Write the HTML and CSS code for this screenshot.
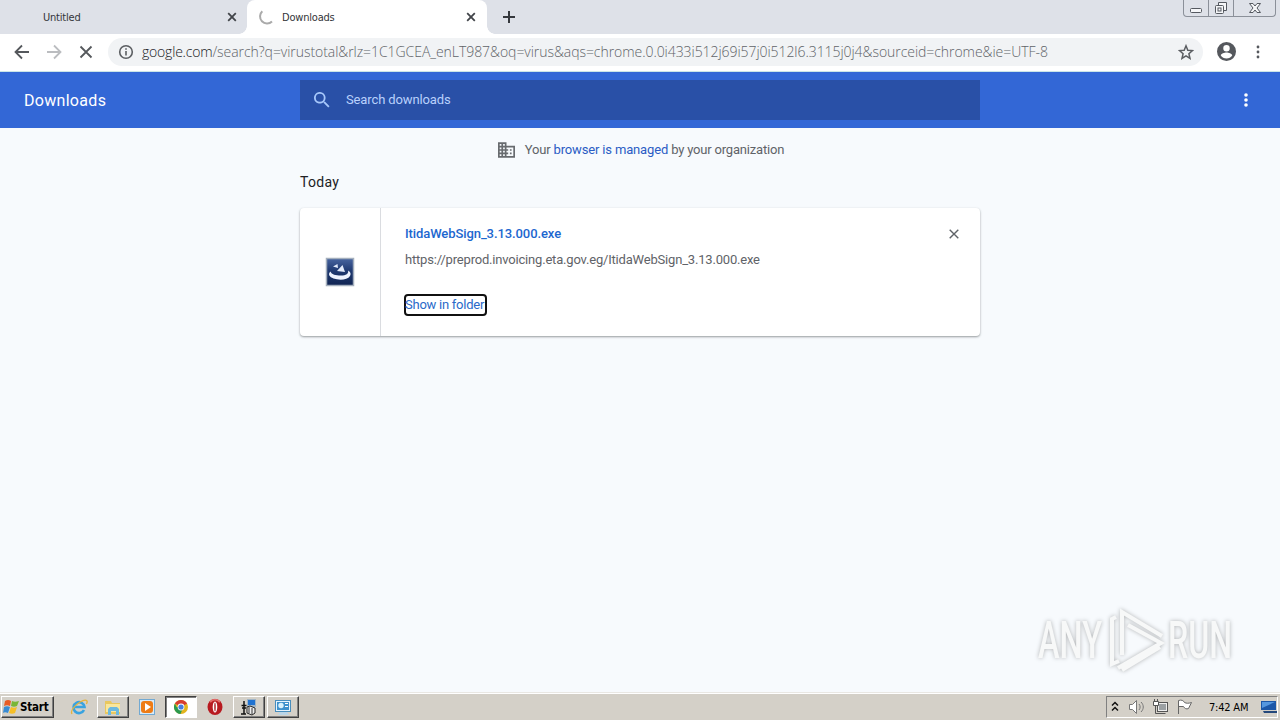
FILE: index.html
```html
<!DOCTYPE html>
<html lang="en">
<head>
    <meta charset="UTF-8">
    <title>Downloads</title>
    <link rel="stylesheet" href="styles.css">
</head>
<body>
<div class="tabs">
    <div class="tab tab-first">
        <span class="tab-title">Untitled</span>
        <svg class="tab-close" viewBox="0 0 10 10"><path d="M1.2 1.2l7.6 7.6M8.8 1.2L1.2 8.8"/></svg>
    </div>
    <div class="tab tab-active">
        <svg class="spinner" viewBox="0 0 16 16"><path d="M4.3 2.2A7 7 0 1 0 14 12.6"/></svg>
        <span class="tab-title">Downloads</span>
        <svg class="tab-close" viewBox="0 0 10 10"><path d="M1.2 1.2l7.6 7.6M8.8 1.2L1.2 8.8"/></svg>
    </div>
    <svg class="new-tab" viewBox="0 0 12 12"><path d="M6 0v12M0 6h12"/></svg>
    <div class="win-buttons">
        <span class="win-btn"><svg width="14" height="16" viewBox="0 0 14 16"><rect x="1.5" y="8.5" width="11" height="4" rx="1"/></svg></span>
        <span class="win-btn"><svg width="14" height="16" viewBox="0 0 14 16"><path d="M4.5 5V2.5h8v8H10"/><rect x="1.5" y="5.5" width="8" height="8" rx="1"/><rect x="4" y="8" width="3" height="3"/></svg></span>
        <span class="win-btn win-close"><svg width="14" height="16" viewBox="0 0 14 16"><path d="M1.5 3.5h3.5l2 2.5 2-2.5h3.500L9 8l3.500 4.500H9L7 10l-2 2.500H1.500L5 8z"/></svg></span>
    </div>
</div>

<div class="toolbar">
    <svg class="nav" viewBox="0 0 16 16"><path d="M15 8H2M8 1.500L1.500 8 8 14.500"/></svg>
    <svg class="nav nav-off" viewBox="0 0 16 16"><path d="M1 8h13M8 1.500L14.500 8 8 14.500"/></svg>
    <svg class="nav" viewBox="0 0 16 16"><path d="M2.500 2.500l11 11M13.500 2.500l-11 11"/></svg>
    <div class="omnibox">
        <svg class="info" viewBox="0 0 16 16"><circle cx="8" cy="8" r="6.300"/><path d="M8 7v4.500M8 4.300v1.500"/></svg>
        <span class="url"><span class="host">google.com</span><span class="path">/search?q=virustotal&amp;rlz=1C1GCEA_enLT987&amp;oq=virus&amp;aqs=chrome.0.0i433i512j69i57j0i512l6.3115j0j4&amp;sourceid=chrome&amp;ie=UTF-8</span></span>
        <svg class="star" viewBox="0 0 16 16"><path d="M8 1.800l1.800 4.400 4.700.4-3.600 3.100 1.100 4.600L8 11.800l-4 2.500 1.100-4.600L1.500 6.600l4.700-.4z"/></svg>
    </div>
    <svg class="avatar" viewBox="2 2 20 20"><path d="M12 2a10 10 0 1 0 0 20 10 10 0 0 0 0-20zm0 3.200a3.400 3.400 0 1 1 0 6.800 3.400 3.400 0 0 1 0-6.800zm0 14.200c-2.500 0-4.700-1.300-6-3.200 0-2 4-3.100 6-3.100s6 1.100 6 3.100a7.200 7.200 0 0 1-6 3.200z"/></svg>
    <svg class="menu" viewBox="0 0 4 14"><circle cx="2" cy="2" r="1.400"/><circle cx="2" cy="7" r="1.400"/><circle cx="2" cy="12" r="1.400"/></svg>
</div>

<div class="header">
    <h1>Downloads</h1>
    <div class="search">
        <svg viewBox="3 3 18 18"><path d="M15.500 14h-.79l-.28-.27A6.500 6.500 0 1 0 13.730 14.430l.27.28v.79l5 4.990L20.490 19l-4.990-5zm-6 0a4.500 4.500 0 1 1 0-9 4.500 4.500 0 0 1 0 9z"/></svg>
        <span>Search downloads</span>
    </div>
    <svg class="more" viewBox="0 0 4 14"><circle cx="2" cy="2" r="1.800"/><circle cx="2" cy="7" r="1.800"/><circle cx="2" cy="12" r="1.800"/></svg>
</div>

<div class="content">
    <div class="managed">
        <svg viewBox="2 3 20 18"><path d="M12 7V3H2v18h20V7H12zM6 19H4v-2h2v2zm0-4H4v-2h2v2zm0-4H4V9h2v2zm0-4H4V5h2v2zm4 12H8v-2h2v2zm0-4H8v-2h2v2zm0-4H8V9h2v2zm0-4H8V5h2v2zm10 12h-8v-2h2v-2h-2v-2h2v-2h-2V9h8v10zm-2-8h-2v2h2v-2zm0 4h-2v2h2v-2z"/></svg>
        <span>Your <a>browser is managed</a> by your organization</span>
    </div>
    <h2>Today</h2>
    <div class="card">
        <div class="card-icon">
            <svg width="30" height="30" viewBox="0 0 30 30">
                <defs><linearGradient id="navy" x2="0" y2="1"><stop stop-color="#4865a0"/><stop offset=".45" stop-color="#203a72"/><stop offset="1" stop-color="#102452"/></linearGradient></defs>
                <rect x="1.500" y="1.500" width="27" height="27" fill="url(#navy)" stroke="#a4afbd" stroke-width="1.500"/>
                <path d="M5.500 14.500C2.500 17 4.500 20 8.500 21.500c6 2 14 1.500 16.500-2.500 1.500-2.500 0-4.500-2-5.500 1 3-2 5-7 5-5.500 0-9.500-1-10.500-4z" fill="#eef3ff"/>
                <path d="M8 9.500L12.500 7l.5 4zM12 14l5.500-6 2.500 7z" fill="#e3ebfb"/>
            </svg>
        </div>
        <div class="card-body">
            <div class="file-name">ItidaWebSign_3.13.000.exe</div>
            <div class="file-url">https://preprod.invoicing.eta.gov.eg/ItidaWebSign_3.13.000.exe</div>
            <span class="show">Show in folder</span>
        </div>
        <svg class="remove" viewBox="0 0 10 10"><path d="M.7.7l8.600 8.600M9.300.7L.7 9.300"/></svg>
    </div>
    <svg class="watermark" width="230" height="80" viewBox="0 0 230 80">
        <g class="mark">
            <text x="18" y="58" textLength="64" lengthAdjust="spacingAndGlyphs">ANY</text>
            <text x="148" y="58" textLength="64" lengthAdjust="spacingAndGlyphs">RUN</text>
            <path d="M96 17l-4 2v45l7-3M102 55V12l40 24M102 20v34M108 25l33 18-43 25M102 70l38-23"/>
        </g>
    </svg>
</div>

<div class="taskbar">
    <div class="task start">
        <svg width="18" height="18" viewBox="0 0 18 18"><path d="M3 3c2-1.500 4-1.500 6 0L8 8c-2-1-4-1-6 0z" fill="#e85b24"/><path d="M10 3c2 1 4 1 7 0l-2 5c-2 1-4 1-6 0z" fill="#79b637"/><path d="M2 9c2-1 4-1 6 0l-2 6c-2-1-4-1-5 0z" fill="#388bd3"/><path d="M9 9c2 1 4 1 6 0l-2 6c-2 1-4 1-6 0z" fill="#f6bf27"/></svg>
        <span>Start</span>
    </div>
    <div class="task flat">
        <svg width="18" height="18" viewBox="0 0 18 18" fill="none"><path d="M14 12a5.500 5.500 0 1 1 .5-3H5" stroke="#39a3e0" stroke-width="2.600"/><path d="M2 16C-1 11 14-1 17 3c.5 1 0 2-.6 3" stroke="#e5b33b" stroke-width="1.300"/></svg>
    </div>
    <div class="task">
        <svg width="18" height="18" viewBox="0 0 18 18"><path d="M1 3h6l1 2h8v11H1z" fill="#e9c75e"/><path d="M2 6h14v8H2z" fill="#f9e69c"/><path d="M4 17v-6l2-2h7l2 2v6h-3v-4H7v4z" fill="#6cb9df"/></svg>
    </div>
    <div class="task flat">
        <svg width="18" height="18" viewBox="0 0 18 18"><rect x="1.500" y="1.500" width="15" height="15" fill="#d9ebf8" stroke="#72a9d2"/><rect x="3" y="3" width="12" height="12" rx="3" fill="#ee7c16"/><path d="M7 5l6 4-6 4z" fill="#fff"/></svg>
    </div>
    <div class="task pressed">
        <svg width="16" height="16" viewBox="0 0 16 16"><circle cx="8" cy="8" r="7" fill="#e2b41e"/><path d="M8 8L1.900 4.500A7 7 0 0 1 14.100 4.500z" fill="#d73c30"/><path d="M8 8H3.500L1.900 4.500A7 7 0 0 0 7.500 15L10 9z" fill="#2b994e"/><circle cx="8" cy="8" r="3.400" fill="#fff"/><circle cx="8" cy="8" r="2.600" fill="#477dde"/></svg>
    </div>
    <div class="task flat">
        <svg width="18" height="18" viewBox="0 0 18 18"><ellipse cx="9" cy="9" rx="7.500" ry="8" fill="#b81a20"/><path d="M4 4c3-3 7-3 10 0" stroke="#e26a68" stroke-width="2" fill="none"/><ellipse cx="9" cy="9" rx="2.300" ry="5.500" fill="#fff"/><ellipse cx="9" cy="9" rx=".7" ry="4.500" fill="#a81118"/></svg>
    </div>
    <div class="task">
        <svg width="18" height="18" viewBox="0 0 18 18"><path d="M7 1h9v8H7z" fill="#9fb4c6"/><path d="M8 2h7v5H8z" fill="#2173d1"/><path d="M4 3v4M1.500 7.500h5M2 10h4M4 7v9M1 16h5" stroke="#111" stroke-width="1.500"/><path d="M7 9l3-1 5 2v5l-3 2-5-2z" fill="#eee" stroke="#222"/><path d="M9 9v6M12 10v6" stroke="#333"/></svg>
    </div>
    <div class="task">
        <svg width="18" height="18" viewBox="0 0 18 18"><rect x="1.500" y="2.500" width="15" height="11" fill="#e6f3fc" stroke="#478dbd"/><path d="M3 4h12v8H3z" fill="#3e91cc"/><circle cx="7" cy="7.500" r="2.700" fill="#d8f1fc"/><path d="M11 5.500h3M11 8.500h3" stroke="#fff"/><path d="M6 14h7l2 3H4z" fill="#bad4e6"/></svg>
    </div>
    <div class="tray">
        <svg width="8" height="12" viewBox="0 0 8 12"><path d="M1 4.500l3-3 3 3M1 9.500l3-3 3 3" fill="none" stroke="#111" stroke-width="1.500"/></svg>
        <svg class="sound" width="18" height="16" viewBox="0 0 18 16"><path d="M1.500 5.500h3l4-4v13l-4-4h-3z" fill="#fff" stroke="#777"/><path d="M11 5c1.500 2 1.500 4 0 6M13 3c3 3 3 7 0 10" fill="none" stroke="#777"/></svg>
        <svg class="network" width="17" height="16" viewBox="0 0 17 16"><rect x="5.500" y="3.500" width="10" height="9" fill="#eee" stroke="#555"/><rect x="7" y="5" width="7" height="6" fill="#9ba0a3"/><path d="M1.500 2.500h5v4h-5z" fill="#fff" stroke="#555"/><path d="M2.500 0v2M5.500 0v2M3.500 7v7.500h10" fill="none" stroke="#555"/></svg>
        <svg class="flag" width="17" height="16" viewBox="0 0 17 16"><path d="M2.500 15V1.500c3-1 5 0 6 2 2 1 4 1 7 0l-3 6c-2 1-4 0-5-2H2.500" fill="#fff" stroke="#666"/></svg>
        <span class="clock">7:42 AM</span>
        <svg width="16" height="14" viewBox="0 0 16 14"><path d="M0 1h15v9H0z" fill="#1c57a8"/><path d="M1 2h13L1 8z" fill="#5597df"/><path d="M2 11h14v2H3z" fill="#24487b"/></svg>
    </div>
</div>
</body>
</html>
```
FILE: styles.css
```css
*{
    margin: 0;
    padding: 0;
    box-sizing: border-box;
}
body{
    display: flex;
    flex-direction: column;
    width: 1280px;
    height: 720px;
    overflow: hidden;
    background-color: #f7fafd;
    font-family: Roboto, sans-serif;
}
svg{
    flex: none;
}

/* tab strip */
.tabs{
    display: flex;
    height: 34px;
    background-color: #dee1e8;
    font: 11px "DejaVu Sans Condensed", "DejaVu Sans", sans-serif;
    color: #333539;
}
.tab{
    display: flex;
    align-items: center;
    height: 34px;
}
.tab-first{
    width: 247px;
    padding: 0 10px 0 43px;
}
.tab-active{
    position: relative;
    width: 240px;
    padding: 0 11px;
    border-radius: 8px 8px 0 0;
    background-color: #fff;
}
/* curved feet of the active tab */
.tab-active::before,.tab-active::after{
    content: "";
    position: absolute;
    bottom: 0;
    width: 8px;
    height: 8px;
}
.tab-active::before{
    left: -8px;
    background: radial-gradient(circle at 0 0, transparent 7.5px, #fff 8px);
}
.tab-active::after{
    right: -8px;
    background: radial-gradient(circle at 100% 0, transparent 7.5px, #fff 8px);
}
.tab-title{
    flex: 1;
    letter-spacing: -0.2px;
}
.tab-close{
    width: 10px;
    height: 10px;
    fill: none;
    stroke: #414449;
    stroke-width: 1.8;
}
.spinner{
    width: 16px;
    height: 16px;
    margin-right: 8px;
    fill: none;
    stroke: #aaa;
    stroke-width: 2;
}
.new-tab{
    width: 12px;
    height: 12px;
    margin: 11px 0 0 16px;
    stroke: #35383d;
    stroke-width: 2;
}
.win-buttons{
    display: flex;
    height: 17px;
    margin: 0 4px 0 auto;
    border: 1px solid #8b9099;
    border-top: 0;
    border-radius: 0 0 4px 4px;
}
.win-btn{
    display: flex;
    justify-content: center;
    width: 25px;
    border-right: 1px solid #8b9099;
}
.win-btn svg{
    fill: #f5f6f8;
    stroke: #555960;
}
.win-close{
    width: 41px;
    border-right: 0;
}

/* address bar */
.toolbar{
    display: flex;
    align-items: center;
    height: 38px;
    padding: 0 20px 2px 14px;
    background-color: #fff;
    border-bottom: 1px solid #cbe5e7;
}
.nav{
    width: 16px;
    height: 16px;
    margin-right: 16px;
    fill: none;
    stroke: #55585c;
    stroke-width: 1.8;
}
.nav-off{
    stroke: #bbbdc0;
}
.omnibox{
    display: flex;
    align-items: center;
    width: 1095px;
    height: 28px;
    margin-left: -2px;
    padding: 0 9px 0 10px;
    border-radius: 14px;
    background-color: #f1f3f5;
}
.info{
    width: 16px;
    height: 16px;
    margin-right: 8px;
    fill: none;
    stroke: #5b5e62;
    stroke-width: 1.6;
}
.url{
    flex: 1;
    font: 300 14px "Open Sans", sans-serif;
    white-space: nowrap;
    color: #5f6368;
}
.host{
    letter-spacing: -0.2px;
    color: #17191c;
}
.path{
    letter-spacing: -0.055px;
}
.star{
    width: 16px;
    height: 16px;
    fill: none;
    stroke: #5b5e62;
    stroke-width: 1.5;
}
.avatar{
    width: 19px;
    height: 19px;
    margin-left: 14px;
    fill: #55585d;
}
.menu{
    width: 4px;
    height: 14px;
    margin-left: auto;
    fill: #55585d;
}

/* page header */
.header{
    display: grid;
    grid-template-columns: 276px 680px 1fr;
    align-items: center;
    height: 56px;
    padding: 0 32px 0 24px;
    background-color: #3367d6;
    color: #fff;
}
.header h1{
    font-size: 16px;
    font-weight: 400;
    letter-spacing: .3px;
}
.search{
    display: flex;
    align-items: center;
    height: 40px;
    padding-left: 14px;
    background-color: #2950a7;
    color: #b9d1fc;
    font-size: 13px;
    letter-spacing: -0.12px;
}
.search span{
    padding-bottom: 2px;
}
.search svg{
    width: 16px;
    height: 16px;
    margin-right: 16px;
    fill: #a7c8fb;
}
.more{
    width: 4px;
    height: 14px;
    justify-self: end;
    fill: #fff;
}

.content{
    position: relative;
    flex: 1;
}
.managed{
    display: flex;
    justify-content: center;
    align-items: center;
    gap: 10px;
    height: 44px;
    padding-left: 2px;
    font-size: 13px;
    letter-spacing: -0.19px;
    color: #5f6368;
}
.managed span{
    padding-bottom: 2px;
}
.managed svg{
    width: 17px;
    height: 16px;
    fill: #686b6f;
}
.managed a{
    letter-spacing: -0.15px;
    color: #2a5cc4;
}
h2{
    width: 680px;
    height: 36px;
    margin: 0 auto;
    line-height: 21px;
    font-size: 14px;
    font-weight: 400;
    letter-spacing: .3px;
    color: #202124;
}
.card{
    display: flex;
    width: 680px;
    height: 128px;
    margin: 0 auto;
    border-radius: 4px;
    background-color: #fff;
    box-shadow: 0 1px 2px rgba(60,64,67,.4), 0 1px 3px rgba(60,64,67,.15);
}
.card-icon{
    display: flex;
    justify-content: center;
    align-items: center;
    width: 81px;
    border-right: 1px solid #dadce0;
}
.card-body{
    flex: 1;
    padding: 16px 0 0 24px;
    font-size: 13px;
}
.file-name{
    line-height: 20px;
    font-weight: 500;
    letter-spacing: -0.09px;
    color: #1c67cf;
}
.file-url{
    margin-top: 6px;
    line-height: 20px;
    letter-spacing: -0.19px;
    color: #5f6368;
}
.show{
    display: inline-block;
    width: 83px;
    height: 22px;
    margin: 24px 0 0 -1px;
    border: 2px solid #111;
    border-radius: 4px;
    line-height: 17px;
    letter-spacing: -0.25px;
    text-indent: -1px;
    white-space: nowrap;
    color: #2a6ac9;
}
.remove{
    width: 10px;
    height: 10px;
    margin: 21px 21px 0 0;
    stroke: #5f6368;
    stroke-width: 1.4;
}
.watermark{
    position: absolute;
    right: 30px;
    bottom: 12px;
}
.mark{
    fill: #f7f8f8;
    stroke: none;
    font: 500 51px Roboto, sans-serif;
    filter: drop-shadow(0 0 2px #b0b2b4);
}
.mark path{
    fill: none;
    stroke: #f7f8f8;
    stroke-width: 4;
}

/* taskbar */
.taskbar{
    display: flex;
    align-items: center;
    height: 28px;
    padding: 1px 2px 0 1px;
    background-color: #d4d0c8;
    border-top: 1px solid #e9e7e3;
    box-shadow: inset 0 1px #fff;
}
.task{
    display: flex;
    justify-content: center;
    align-items: center;
    width: 32px;
    height: 22px;
    margin-right: 2px;
    border: 1px solid;
    border-color: #fff #404040 #404040 #fff;
    box-shadow: inset -1px -1px #808080;
}
.start{
    justify-content: flex-start;
    width: 53px;
    margin-right: 9px;
    font: bold 11.500px "DejaVu Sans Condensed", "DejaVu Sans", sans-serif;
    letter-spacing: -0.2px;
    color: #000;
}
.flat{
    border-color: transparent;
    box-shadow: none;
}
.pressed{
    background-color: #fff;
    border-color: #404040 #fff #fff #404040;
    box-shadow: inset 1px 1px #808080;
}
.tray{
    display: flex;
    align-items: center;
    width: 172px;
    height: 22px;
    margin-left: auto;
    padding-left: 4px;
    border: 1px solid;
    border-color: #808080 #fff #fff #808080;
}
.sound{
    margin-left: 9px;
}
.network{
    margin-left: 6px;
}
.flag{
    margin-left: 7px;
}
.clock{
    flex: 1;
    padding-left: 16px;
    font: 11px "DejaVu Sans Condensed", "DejaVu Sans", sans-serif;
    letter-spacing: -0.2px;
    white-space: nowrap;
}
```
